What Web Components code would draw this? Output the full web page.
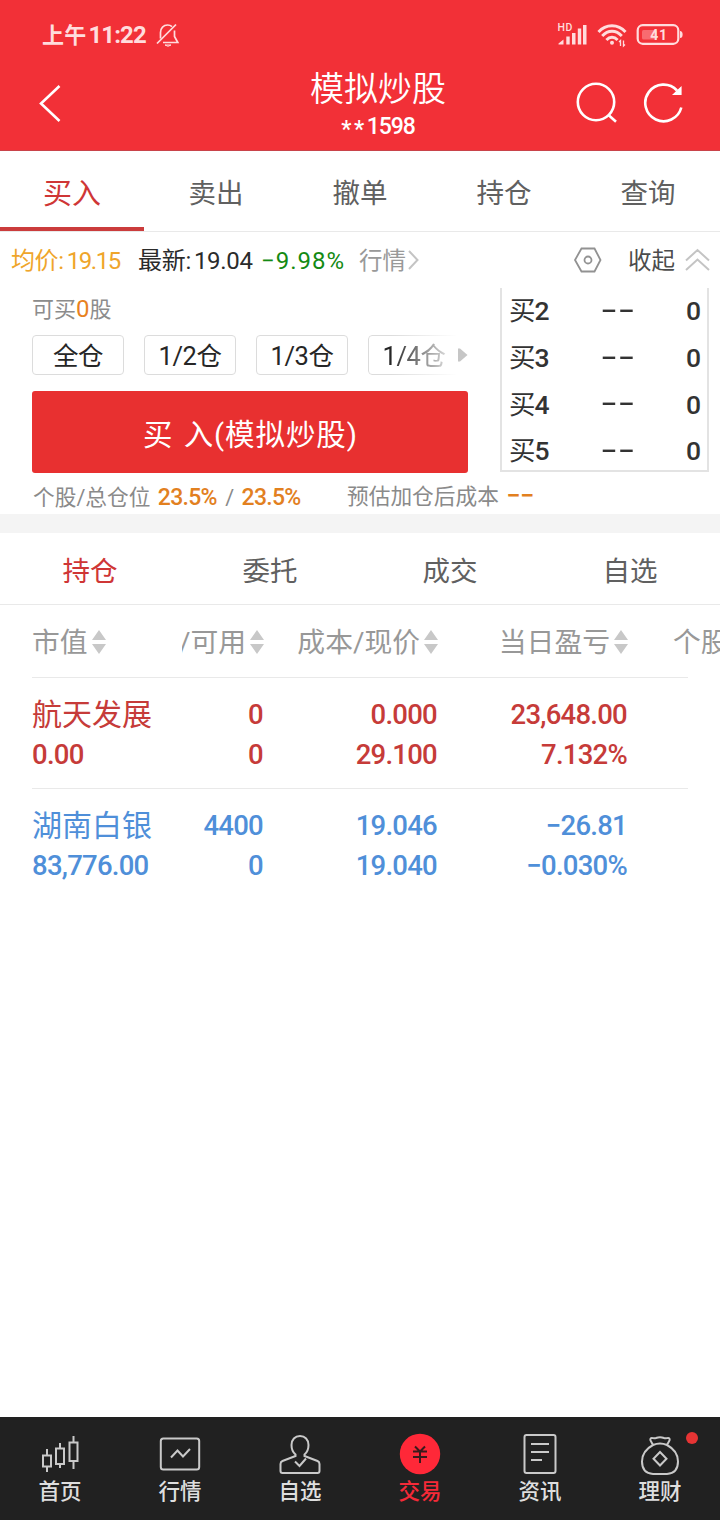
<!DOCTYPE html>
<html lang="zh-CN">
<head>
<meta charset="utf-8">
<title>模拟炒股</title>
<style>
  body {
    margin: 0;
    background: #fff;
    font-family: Roboto, 'Noto Sans CJK SC', sans-serif;
  }
</style>
</head>
<body>
<trade-app></trade-app>

<script>
// attaches an open shadow root with the given markup
class BaseElement extends HTMLElement {
  constructor() {
    super();
    this.attachShadow({ mode: 'open' });
  }

  connectedCallback() {
    this.shadowRoot.innerHTML = this.render();
  }
}

class StatusBar extends BaseElement {
  render() {
    return `
      <style>
        :host {
          display: flex;
          align-items: center;
          height: 70px;
          padding: 0 36px 0 42px;
          box-sizing: border-box;
          color: #ffdcdd;
        }

        .time {
          width: 103px;
          font-size: 24px;
          font-weight: 700;
          line-height: 30px;
          letter-spacing: -0.9px;
          white-space: nowrap;
        }

        .time span {
          margin-right: 2px;
          font-size: 22px;
          font-weight: 700;
          letter-spacing: 0.2px;
        }

        .bell {
          margin-left: 11px;
        }

        .right {
          display: flex;
          margin-left: auto;
        }

        svg {
          display: block;
        }
      </style>
      <div class="time"><span>上午</span>11:22</div>
      <svg class="bell" width="24" height="24" fill="none" stroke="currentColor" stroke-width="1.7">
        <path d="M4.500 15.500V9.500C4.500 5 7.500 2 11.500 2c2 0 3.500.7 4.500 1.700M18.500 7.500v6l3.300 6H7"/>
        <path d="M1 20.500 20 1.500"/>
        <path d="M9 22h6q-3 2.500-6 0z" stroke-width="1"/>
      </svg>
      <div class="right">
        <svg width="40" height="28" fill="currentColor">
          <text x="0.500" y="10" font-size="10.500" font-weight="500" letter-spacing="0.600">HD</text>
          <path d="M1.500 22.500 6.500 18.500v5h-5zM9.300 15.500h3.400v8H9.300zM15 12h3.500v11.500H15zM20.800 7.500h3.400v16h-3.400zM26 4h3.500v19.500H26z"/>
        </svg>
        <svg width="39" height="28" fill="none" stroke="currentColor" stroke-width="2.900">
          <path d="M1.500 11Q7 4.800 15 4.800T28.500 11M5.200 15Q9.500 10.300 15 10.300T24.800 15M9.400 19Q12 16.200 15 16.200T20.600 19"/>
          <circle cx="15" cy="21.800" r="2" fill="currentColor" stroke="none"/>
          <path d="M23.500 25v-5.500l-1.500 1.500M26.500 19.500V25l1.500-1.500" stroke-width="1.300"/>
        </svg>
        <svg width="48" height="28">
          <rect x="1.700" y="4.200" width="40.600" height="18.600" rx="5" fill="none" stroke="currentColor" stroke-width="2.200"/>
          <rect x="6" y="9" width="15" height="9.500" rx="1.500" fill="#f86b70"/>
          <text x="23" y="18.500" font-size="14" font-weight="700" text-anchor="middle" letter-spacing="0.600" fill="currentColor">41</text>
          <path d="M44 10q2.600 0 2.600 3.500T44 17z" fill="currentColor"/>
        </svg>
      </div>
    `;
  }
}

class NavHeader extends BaseElement {
  render() {
    return `
      <style>
        :host {
          display: grid;
          grid-template-columns: 145px 1fr 109px;
          height: 80px;
          padding: 0 36px 0 0;
          color: #fff;
        }

        .back {
          padding: 14px 0 0 36px;
        }

        .title {
          padding-left: 104px;
          padding-right: 68px;
          text-align: center;
          white-space: nowrap;
        }

        h1 {
          margin: 0;
          font-size: 34px;
          font-weight: 350;
          line-height: 38px;
        }

        p {
          margin: 6px 0 0;
          font-size: 23px;
          font-weight: 500;
          line-height: 26px;
          letter-spacing: -1.100px;
        }

        p i {
          font-style: normal;
          letter-spacing: 2.500px;
          position: relative;
          top: 3px;
        }

        .tools {
          display: flex;
          justify-content: flex-end;
          gap: 26px;
          padding-top: 10px;
        }

        svg {
          display: block;
        }
      </style>
      <div class="back">
        <svg width="30" height="40" fill="none" stroke="currentColor" stroke-width="2.600">
          <path d="M23.500 2 5 19.500 23.500 37"/>
        </svg>
      </div>
      <div class="title">
        <h1><slot></slot></h1>
        <p><i>**</i>1598</p>
      </div>
      <div class="tools">
        <svg width="44" height="44" fill="none" stroke="currentColor" stroke-width="2.600">
          <circle cx="21" cy="22" r="18.200"/>
          <path d="m33.500 35 7.500 6.800"/>
        </svg>
        <svg width="42" height="44" fill="none" stroke="currentColor" stroke-width="2.600">
          <path d="M38.300 27.500A18.300 18.300 0 1 1 34 10.500"/>
          <path d="M38 7.500v7h-7.500z" fill="currentColor" stroke-width="1.200"/>
        </svg>
      </div>
    `;
  }
}

// <tab-strip items="a,b,c" active="0" underline>
class TabStrip extends BaseElement {
  render() {
    const active = Number(this.getAttribute('active'));
    const tabs = this.getAttribute('items').split(',').map((name, i) => (
      `<div class="tab ${i === active ? 'active' : ''}">${name}</div>`
    ));

    return `
      <style>
        :host {
          display: flex;
          height: 72px;
          box-sizing: border-box;
          border-bottom: 1px solid #e9e9e9;
          color: #606060;
        }

        :host([underline]) {
          height: 81px;
        }

        .tab {
          flex: 1;
          display: flex;
          align-items: center;
          justify-content: center;
          font-size: 27.500px;
          line-height: 40px;
          padding-top: 7px;
        }

        .active {
          color: #cf3636;
        }

        :host([underline]) .tab {
          padding-top: 9px;
          border-bottom: 4px solid transparent;
        }

        :host([underline]) .active {
          font-size: 29px;
          border-color: #cb3c3c;
        }
      </style>
      ${tabs.join('')}
    `;
  }
}

class QuoteBar extends BaseElement {
  render() {
    return `
      <style>
        :host {
          display: flex;
          align-items: center;
          height: 56px;
          padding: 2px 10px 0 11px;
          box-sizing: border-box;
          font-size: 24px;
          line-height: 32px;
          white-space: nowrap;
          color: #2b2b2b;
        }

        span {
          display: inline-block;
        }

        b {
          margin-left: 3px;
          font-weight: 400;
        }

        .avg {
          width: 127px;
          color: #efa52b;
          letter-spacing: -0.400px;
        }

        .avg b {
          letter-spacing: -1.400px;
        }

        .last {
          width: 123px;
          letter-spacing: -0.300px;
        }

        .pct {
          width: 98px;
          color: #138a13;
          letter-spacing: 1px;
        }

        .link {
          display: flex;
          align-items: center;
          color: #999;
          font-size: 23.500px;
        }

        .fold {
          display: flex;
          align-items: center;
          margin-left: auto;
          color: #4c4c4c;
          font-size: 23.500px;
        }

        .gear {
          margin-right: 26px;
        }

        .up {
          margin-left: 10px;
        }

        svg {
          display: block;
          margin-bottom: 2px;
        }
      </style>
      <span class="avg">均价:<b><slot name="avg"></slot></b></span>
      <span class="last">最新:<b><slot name="last"></slot></b></span>
      <span class="pct"><slot name="pct"></slot></span>
      <div class="link">行情
        <svg width="14" height="24" fill="none" stroke="#c4c4c4" stroke-width="2">
          <path d="m3 3 8.500 9L3 21"/>
        </svg>
      </div>
      <div class="fold">
        <svg class="gear" width="29" height="28" fill="none" stroke="#929292" stroke-width="1.800">
          <path d="M8.500 2.500h13l6 11.500-6 11.500h-13L2 14z"/>
          <circle cx="15" cy="14" r="3.500"/>
        </svg>
        收起
        <svg class="up" width="25" height="24" fill="none" stroke="#c4c4c4" stroke-width="2">
          <path d="M1 12.500 12.500 2 24 12.500M1 22 12.500 11.500 24 22"/>
        </svg>
      </div>
    `;
  }
}

class OrderForm extends BaseElement {
  render() {
    return `
      <style>
        :host {
          display: block;
          width: 436px;
          white-space: nowrap;
        }

        .avail {
          height: 42px;
          padding-top: 5px;
          box-sizing: border-box;
          font-size: 22px;
          line-height: 32px;
          color: #8c8c8c;
        }

        .avail b {
          font-size: 24px;
          font-weight: 400;
          color: #e8821e;
        }

        .chips {
          display: flex;
          align-items: center;
          margin-top: 5px;
        }

        .list {
          display: flex;
          gap: 20px;
          width: 424px;
          overflow: hidden;
        }

        .chip {
          flex: none;
          width: 92px;
          height: 40px;
          box-sizing: border-box;
          border: 1px solid #dcdcdc;
          border-radius: 4px;
          font-size: 25.500px;
          line-height: 41px;
          letter-spacing: -0.400px;
          text-align: center;
          color: #262626;
        }

        .chip:last-child {
          -webkit-mask-image: linear-gradient(to right, #000 25%, transparent 98%);
          mask-image: linear-gradient(to right, #000 25%, transparent 98%);
        }

        .buy {
          display: block;
          width: 100%;
          height: 82px;
          margin: 16px 0 0;
          padding: 0 0 1px 1px;
          border: 0;
          border-radius: 3px;
          background: #e83030;
          color: #fff;
          font: inherit;
          font-size: 29.500px;
          letter-spacing: 0.900px;
          word-spacing: 2px;
        }
      </style>
      <div class="avail">可买<b>0</b>股</div>
      <div class="chips">
        <div class="list">
          <div class="chip">全仓</div>
          <div class="chip">1/2仓</div>
          <div class="chip">1/3仓</div>
          <div class="chip">1/4仓</div>
        </div>
        <svg width="12" height="16"><path d="M2 1.500h2l7.500 6.500L4 14.500H2z" fill="#c6c6c6"/></svg>
      </div>
      <button class="buy">买 入(模拟炒股)</button>
    `;
  }
}

class DepthBook extends BaseElement {
  render() {
    const rows = ['2', '3', '4', '5'].map(n => `
      <div class="row"><span>买<b>${n}</b></span><i>--</i><b>0</b></div>
    `);

    return `
      <style>
        :host {
          display: block;
          width: 209px;
          height: 184px;
          box-sizing: border-box;
          border: 2px solid #e3e3e3;
          border-top: 0;
          color: #333;
        }

        .row {
          display: grid;
          grid-template-columns: 91px 1fr auto;
          align-items: center;
          height: 46.700px;
          padding: 0 6px 0 7px;
          font-size: 26.500px;
          line-height: 46px;
        }

        b {
          font-weight: 500;
        }

        span b {
          margin-left: -1px;
        }

        /* wide dashes for an empty price */
        i {
          font-family: Inter, sans-serif;
          font-style: normal;
          font-size: 30px;
          line-height: 40px;
          margin-top: -5px;
          letter-spacing: -0.400px;
          transform: scaleX(1.300);
          transform-origin: left;
        }
      </style>
      ${rows.join('')}
    `;
  }
}

class PositionSummary extends BaseElement {
  render() {
    return `
      <style>
        :host {
          display: flex;
          height: 42px;
          padding: 0 33px;
          font-size: 21.700px;
          line-height: 49px;
          white-space: nowrap;
          color: #8a8a8a;
        }

        .ratio {
          width: 314px;
          line-height: 51px;
        }

        b {
          margin: 0 3px 0 2px;
          font-size: 23px;
          font-weight: 500;
          letter-spacing: -0.700px;
          color: #e2801f;
        }

        i {
          display: inline-block;
          font-family: Inter, sans-serif;
          font-style: normal;
          font-size: 26px;
          font-weight: 500;
          line-height: 20px;
          letter-spacing: -1.100px;
          transform: translate(2px, -1px) scaleX(1.250);
          transform-origin: left;
          color: #e2801f;
        }
      </style>
      <div class="ratio">个股/总仓位 <b>23.5%</b> / <b>23.5%</b></div>
      <div>预估加仓后成本 <i>--</i></div>
    `;
  }
}

const COLUMNS = '150px 82px 174px 190px 1fr';

class PositionHead extends BaseElement {
  render() {
    const arrows = `
      <svg width="14" height="24" fill="#c8c8c8"><path d="M7 0l7 10H0zM0 14h14L7 24z"/></svg>
    `;
    const [first, ...rest] = this.getAttribute('labels').split(',');
    const last = rest.pop();

    return `
      <style>
        :host {
          display: grid;
          grid-template-columns: ${COLUMNS};
          align-items: center;
          height: 72px;
          padding: 4px 0 0 32px;
          box-sizing: border-box;
          overflow: hidden;
          font-size: 27.800px;
          line-height: 40px;
          white-space: nowrap;
          color: #989898;
        }

        div {
          display: flex;
          align-items: center;
          justify-content: flex-end;
          gap: 4px;
          overflow: hidden;
        }

        .first {
          justify-content: flex-start;
        }

        .last {
          display: block;
          padding-left: 45px;
        }

        svg {
          flex: none;
          margin-bottom: 3px;
        }
      </style>
      <div class="first">${first}${arrows}</div>
      ${rest.map(label => `<div>${label}${arrows}</div>`).join('')}
      <div class="last">${last}</div>
    `;
  }
}

// name and market value on the left, then pairs of stacked numbers
class PositionRow extends BaseElement {
  render() {
    const cells = this.getAttribute('cells').split(';').map((pair) => {
      const [top, bottom] = pair.split('|');
      return `<div class="cell"><p>${top}</p><p>${bottom}</p></div>`;
    });

    return `
      <style>
        :host {
          display: grid;
          grid-template-columns: ${COLUMNS};
          height: 111px;
          margin: 0 32px;
          padding-top: 17px;
          box-sizing: border-box;
          border-top: 1px solid #e9e9e9;
          font-size: 27.500px;
          font-weight: 500;
          letter-spacing: -0.750px;
          white-space: nowrap;
          color: #c63b39;
        }

        :host([down]) {
          color: #4f8fd9;
        }

        p {
          margin: 0;
          line-height: 40px;
        }

        .name {
          font-size: 30px;
          font-weight: 400;
          letter-spacing: 0;
        }

        .cell {
          padding-right: 1px;
          text-align: right;
        }
      </style>
      <div>
        <p class="name"><slot></slot></p>
        <p>${this.getAttribute('value')}</p>
      </div>
      ${cells.join('')}
    `;
  }
}

class TabbarItem extends BaseElement {
  render() {
    return `
      <style>
        :host {
          position: relative;
          display: flex;
          flex: 1;
          flex-direction: column;
          align-items: center;
          padding-top: 15px;
          color: #c9c9c9;
        }

        .label {
          font-size: 21.500px;
          font-weight: 500;
          line-height: 32px;
          color: #dedede;
        }

        :host([active]) .label {
          color: #f52a38;
        }

        :host([dot])::after {
          content: '';
          position: absolute;
          top: 15px;
          right: 22px;
          width: 12px;
          height: 12px;
          border-radius: 50%;
          background: #e63434;
        }
      </style>
      <slot name="icon"></slot>
      <div class="label"><slot></slot></div>
    `;
  }
}

class AppTabbar extends BaseElement {
  render() {
    return `
      <style>
        :host {
          display: flex;
          height: 103px;
          background: #212121;
        }

        svg {
          display: block;
          fill: none;
          stroke: currentColor;
          stroke-width: 2;
        }
      </style>
      <tabbar-item>
        <svg slot="icon" width="44" height="44">
          <path d="M5 23.500h8v11H5zM18 16.500h8V32h-8zM31.500 10.500h8V29h-8zM9 17v6.500M9 34.500V40M22 11v5.500M22 32v4M35.500 4v6.500M35.500 29v8"/>
        </svg>
        首页
      </tabbar-item>
      <tabbar-item>
        <svg slot="icon" width="44" height="44">
          <rect x="2.800" y="6.500" width="38.400" height="31" rx="2.500"/>
          <path d="m13 25.500 6.500-7 5.500 6 7-7.500"/>
        </svg>
        行情
      </tabbar-item>
      <tabbar-item>
        <svg slot="icon" width="44" height="44">
          <path d="M17.500 22.500C14.500 20 13.500 17 13.500 13c0-5.500 3.500-9 8.500-9s8.500 3.500 8.500 9c0 4-1 7-4 9.500v1.500l13 5c1.500.7 2 1.500 2 3v7c0 1.300-.9 2-2 2h-35c-1.100 0-2-.7-2-2v-7c0-1.500.5-2.300 2-3l13-5z"/>
          <path d="m17 29.500 4.500 4.500 6.500-7.500"/>
        </svg>
        自选
      </tabbar-item>
      <tabbar-item active>
        <svg slot="icon" width="44" height="44">
          <circle cx="22" cy="22" r="20.200" fill="#ff2838" stroke="none"/>
          <path d="m17 14.500 5 5 5-5M15 19.500h14M15 25h14M22 19.500V31" stroke="#3a1a1c"/>
        </svg>
        交易
      </tabbar-item>
      <tabbar-item>
        <svg slot="icon" width="44" height="44">
          <rect x="6.500" y="3" width="31" height="38" rx="2"/>
          <path d="M13 12h18M13 20h18M13 28h11"/>
        </svg>
        资讯
      </tabbar-item>
      <tabbar-item dot>
        <svg slot="icon" width="44" height="44">
          <path d="M15 13 12.500 8.500C12 6.500 12.700 6 14 6c2 .3 2.500.5 4 0q4-1.500 8 0c1.500.5 2 .3 4 0 1.300 0 2 .5 1.500 2.500L29 13q-7-3-14 0C8.500 16.500 4 22.500 4 29.500 4 38 8 41.500 15 42h14c7-.5 11-4 11-12.500 0-7-4.500-13-11-16.500"/>
          <path d="m22 20 6.500 6.700L22 33.500l-6.500-6.800z"/>
        </svg>
        理财
      </tabbar-item>
    `;
  }
}

class TradeApp extends BaseElement {
  render() {
    return `
      <style>
        :host {
          display: flex;
          flex-direction: column;
          width: 720px;
          height: 1520px;
          overflow: hidden;
        }

        header {
          height: 151px;
          background: #f23037;
          box-sizing: border-box;
          border-bottom: 1px solid #c9434a;
        }

        .trade {
          display: flex;
          justify-content: space-between;
          height: 184px;
          padding: 0 11px 0 32px;
        }

        .gap {
          height: 19px;
          background: #f4f4f4;
        }

        main {
          flex: 1;
        }
      </style>
      <header>
        <status-bar></status-bar>
        <nav-header>模拟炒股</nav-header>
      </header>
      <tab-strip items="买入,卖出,撤单,持仓,查询" active="0" underline></tab-strip>
      <quote-bar>
        <span slot="avg">19.15</span>
        <span slot="last">19.04</span>
        <span slot="pct">−9.98%</span>
      </quote-bar>
      <div class="trade">
        <order-form></order-form>
        <depth-book></depth-book>
      </div>
      <position-summary></position-summary>
      <div class="gap"></div>
      <tab-strip items="持仓,委托,成交,自选" active="0"></tab-strip>
      <main>
        <position-head labels="市值,/可用,成本/现价,当日盈亏,个股"></position-head>
        <position-row value="0.00" cells="0|0;0.000|29.100;23,648.00|7.132%">航天发展</position-row>
        <position-row down value="83,776.00" cells="4400|0;19.046|19.040;−26.81|−0.030%">湖南白银</position-row>
      </main>
      <app-tabbar></app-tabbar>
    `;
  }
}

customElements.define('status-bar', StatusBar);
customElements.define('nav-header', NavHeader);
customElements.define('tab-strip', TabStrip);
customElements.define('quote-bar', QuoteBar);
customElements.define('order-form', OrderForm);
customElements.define('depth-book', DepthBook);
customElements.define('position-summary', PositionSummary);
customElements.define('position-head', PositionHead);
customElements.define('position-row', PositionRow);
customElements.define('tabbar-item', TabbarItem);
customElements.define('app-tabbar', AppTabbar);
customElements.define('trade-app', TradeApp);
</script>
</body>
</html>
